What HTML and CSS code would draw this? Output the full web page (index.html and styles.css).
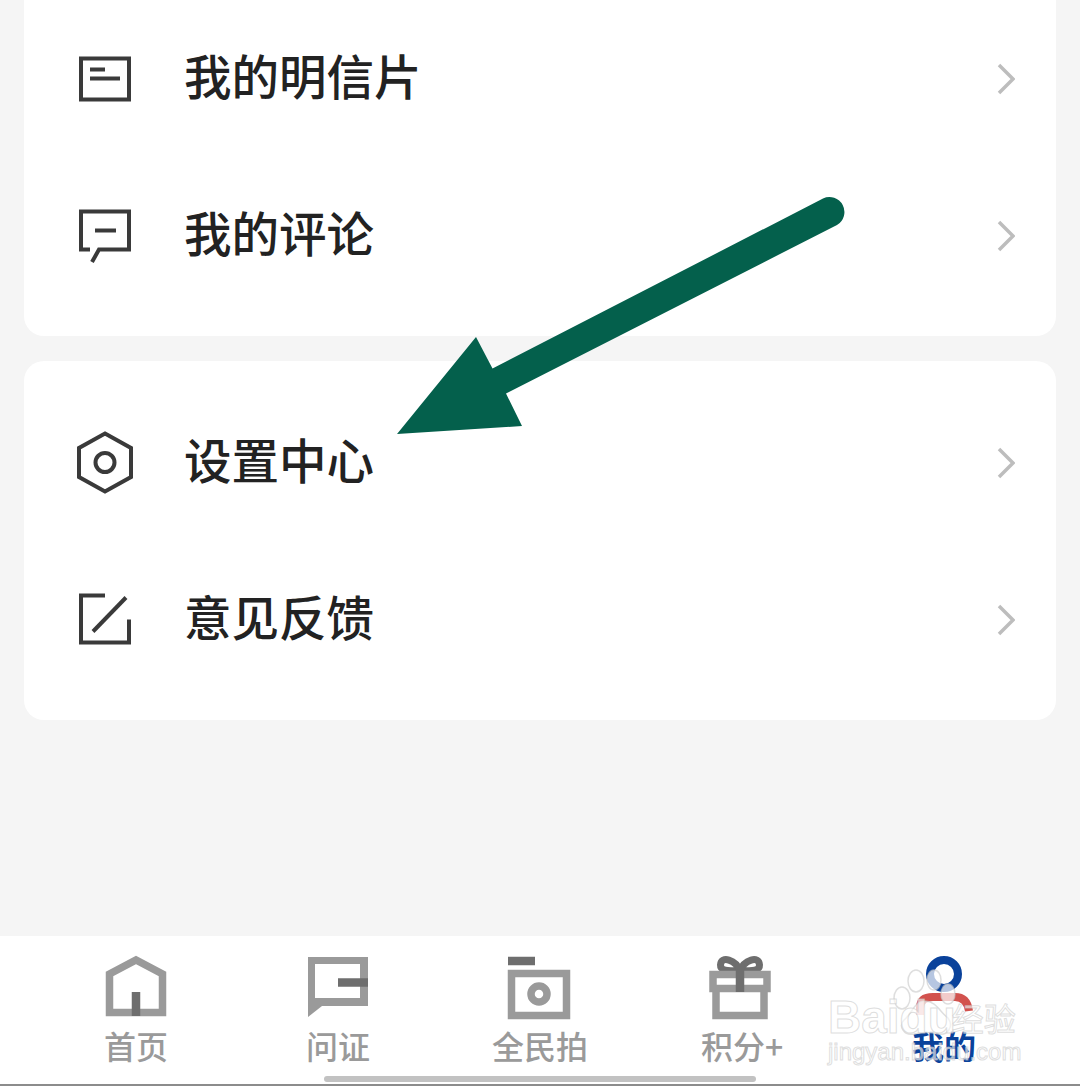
FILE: index.html
```html
<!DOCTYPE html>
<html lang="zh-CN">

<head>
    <meta charset="UTF-8">
    <meta name="viewport" content="width=device-width, initial-scale=1.0">
    <title>我的</title>
    <link rel="stylesheet" href="styles.css">
</head>

<body>
    <div class="page">
        <div class="content">
            <div class="card card-top">
                <div class="row">
                    <svg class="row-icon" viewBox="0 0 56 64">
                        <rect x="4" y="11.5" width="48" height="41" />
                        <path d="M13 22.5H28M13 31.5H43" />
                    </svg>
                    <span class="row-text">我的明信片</span>
                    <svg class="chevron" viewBox="0 0 18 32"><path d="M2 2L16 16L2 30" /></svg>
                </div>
                <div class="row">
                    <svg class="row-icon" viewBox="0 0 56 64">
                        <path d="M13 45.5H4V7.5H52V45.5H22L15 58" />
                        <path d="M18 26.5H39" />
                    </svg>
                    <span class="row-text">我的评论</span>
                    <svg class="chevron" viewBox="0 0 18 32"><path d="M2 2L16 16L2 30" /></svg>
                </div>
            </div>
            <div class="card">
                <div class="row">
                    <svg class="row-icon" viewBox="0 0 56 64">
                        <path d="M28 2.500L54 17V46L28 60.500L2 46V17Z" />
                        <circle cx="28" cy="31.500" r="9.5" />
                    </svg>
                    <span class="row-text">设置中心</span>
                    <svg class="chevron" viewBox="0 0 18 32"><path d="M2 2L16 16L2 30" /></svg>
                </div>
                <div class="row">
                    <svg class="row-icon" viewBox="0 0 56 64">
                        <path d="M28 7.5H4V54.5H52V31.5" />
                        <path d="M16 43.5L49 9.5" />
                    </svg>
                    <span class="row-text">意见反馈</span>
                    <svg class="chevron" viewBox="0 0 18 32"><path d="M2 2L16 16L2 30" /></svg>
                </div>
            </div>
        </div>

        <div class="tabbar">
            <div class="tab">
                <svg class="tab-icon" viewBox="0 0 66 66">
                    <path class="light" d="M6.500 58.500V20L33 6L59.500 20V58.500Z" />
                    <path class="dark" d="M33 38V62" />
                </svg>
                <span class="tab-label">首页</span>
            </div>
            <div class="tab">
                <svg class="tab-icon" viewBox="0 0 66 66">
                    <path class="fill-light" fill-rule="evenodd" d="M3 3H63V52H17L3 63ZM10 10V44H55V10Z" />
                    <path class="dark" d="M33 28.500H63" />
                </svg>
                <span class="tab-label">问证</span>
            </div>
            <div class="tab">
                <svg class="tab-icon" viewBox="1 0 66 66">
                    <path class="dark" d="M2 7H29" />
                    <rect class="light" x="5.500" y="19.500" width="55" height="42" />
                    <circle class="light" cx="33" cy="40" r="8" />
                </svg>
                <span class="tab-label">全民拍</span>
            </div>
            <div class="tab">
                <svg class="tab-icon" viewBox="2 0 66 66">
                    <path class="bow" d="M33 17C29 6 14 1 13.500 11C13.200 17 20 17 33 17C46 17 52.800 17 52.500 11C52 1 37 6 33 17Z" />
                    <rect class="light" x="6" y="20.500" width="54" height="14" />
                    <path class="light" d="M9 34V61.500H57V34" />
                    <path class="dark" d="M33 10V38" />
                </svg>
                <span class="tab-label">积分+</span>
            </div>
            <div class="tab tab-active">
                <svg class="tab-icon" viewBox="0 0 66 66">
                    <circle class="ring" cx="33" cy="20" r="14" />
                    <path class="shoulder" d="M9 61V54Q9 43 22 43H44Q56 43 58 57" />
                </svg>
                <span class="tab-label">我的</span>
            </div>
        </div>

        <div class="home-bar"></div>

        <svg class="arrow" viewBox="0 0 1080 1086">
            <path d="M397 434L476 337L492.500 368.500L823 198.500A15 15 0 0 1 837 225L506 393.500L522 426Z" />
        </svg>

        <div class="watermark">
            <svg class="paw" viewBox="0 0 70 70">
                <ellipse cx="10" cy="30" rx="8" ry="11" />
                <ellipse cx="24" cy="13" rx="8" ry="11" />
                <ellipse cx="42" cy="12" rx="7" ry="10" />
                <ellipse cx="56" cy="26" rx="7" ry="10" />
                <path d="M33 33C22 33 20 46 12 52C6 58 12 68 22 66C30 64 38 64 46 66C56 68 62 58 56 50C48 44 44 33 33 33Z" />
            </svg>
            <div class="wm-line"><span class="wm-baidu">Baidu</span><span class="wm-cn">经验</span></div>
            <div class="wm-url">jingyan.baidu.com</div>
        </div>
    </div>
</body>

</html>
```

FILE: styles.css
```css
body {
    margin: 0;
    padding: 0;
    font-family: "Noto Sans CJK SC", "Liberation Sans", sans-serif;
    background-color: #f5f5f5;
}

.page {
    position: relative;
    display: flex;
    flex-direction: column;
    height: 1086px;
    overflow: hidden;
}

.content {
    flex: 1;
    display: flex;
    flex-direction: column;
    gap: 25px;
    padding: 0 24px;
}

.card {
    background: white;
    border-radius: 20px;
    padding: 23px 0 22px;
}

.card-top {
    border-radius: 0 0 20px 20px;
    padding-top: 0;
}

.row {
    display: flex;
    align-items: center;
    height: 157px;
    padding: 0 41px 0 53px;
}

.row-icon {
    width: 56px;
    height: 64px;
    margin-right: 51px;
    fill: none;
    stroke: #3a3a3a;
    stroke-width: 4;
}

.row-text {
    flex: 1;
    margin-top: -8px;
    font-size: 47.5px;
    font-weight: 500;
    color: #222;
}

.chevron {
    width: 18px;
    height: 32px;
    fill: none;
    stroke: #bdbdbd;
    stroke-width: 3.5;
}

.tabbar {
    display: grid;
    grid-template-columns: repeat(5, 1fr);
    height: 150px;
    padding: 18px 35px 0;
    box-sizing: border-box;
    background: white;
    border-bottom: 2px solid #8c8c8c;
}

.tab {
    display: flex;
    flex-direction: column;
    align-items: center;
}

.tab-icon {
    width: 66px;
    height: 66px;
}

.tab-label {
    font-size: 32px;
    line-height: 50px;
    font-weight: 500;
    color: #9a9a9a;
}

.tab-active .tab-label {
    color: #0a429b;
    font-weight: 700;
}

.light {
    fill: none;
    stroke: #9a9a9a;
    stroke-width: 7.5;
}

.fill-light {
    fill: #9a9a9a;
}

.dark {
    fill: none;
    stroke: #6e6e6e;
    stroke-width: 8.5;
}

.bow {
    fill: none;
    stroke: #6e6e6e;
    stroke-width: 7;
}

.ring {
    fill: none;
    stroke: #0a429b;
    stroke-width: 8;
}

.shoulder {
    fill: none;
    stroke: #d2524e;
    stroke-width: 8;
}

.home-bar {
    position: absolute;
    left: 324px;
    bottom: 4px;
    width: 432px;
    height: 6px;
    border-radius: 3px;
    background: #c2c2c2;
}

.arrow {
    position: absolute;
    left: 0;
    top: 0;
    width: 1080px;
    height: 1086px;
    fill: #04604c;
}

.watermark {
    position: absolute;
    left: 828px;
    top: 968px;
    width: 200px;
    height: 100px;
    font-family: "Liberation Sans", "Noto Sans CJK SC", sans-serif;
    color: rgba(255, 255, 255, 0.6);
    -webkit-text-stroke: 1px rgba(200, 200, 200, 0.6);
}

.paw {
    position: absolute;
    left: 64px;
    top: 0;
    width: 70px;
    height: 70px;
    fill: rgba(255, 255, 255, 0.7);
    stroke: rgba(200, 200, 200, 0.6);
    stroke-width: 1.5;
}

.wm-line {
    position: absolute;
    left: 0;
    top: 24px;
    display: flex;
    align-items: center;
    white-space: nowrap;
}

.wm-baidu {
    font-size: 46px;
    font-weight: 700;
    line-height: 50px;
}

.wm-cn {
    font-family: "Noto Sans CJK SC", sans-serif;
    font-size: 32px;
    margin-left: -4px;
    line-height: 50px;
}

.wm-url {
    position: absolute;
    left: 0;
    top: 69px;
    font-size: 24px;
    line-height: 30px;
    white-space: nowrap;
}
```
